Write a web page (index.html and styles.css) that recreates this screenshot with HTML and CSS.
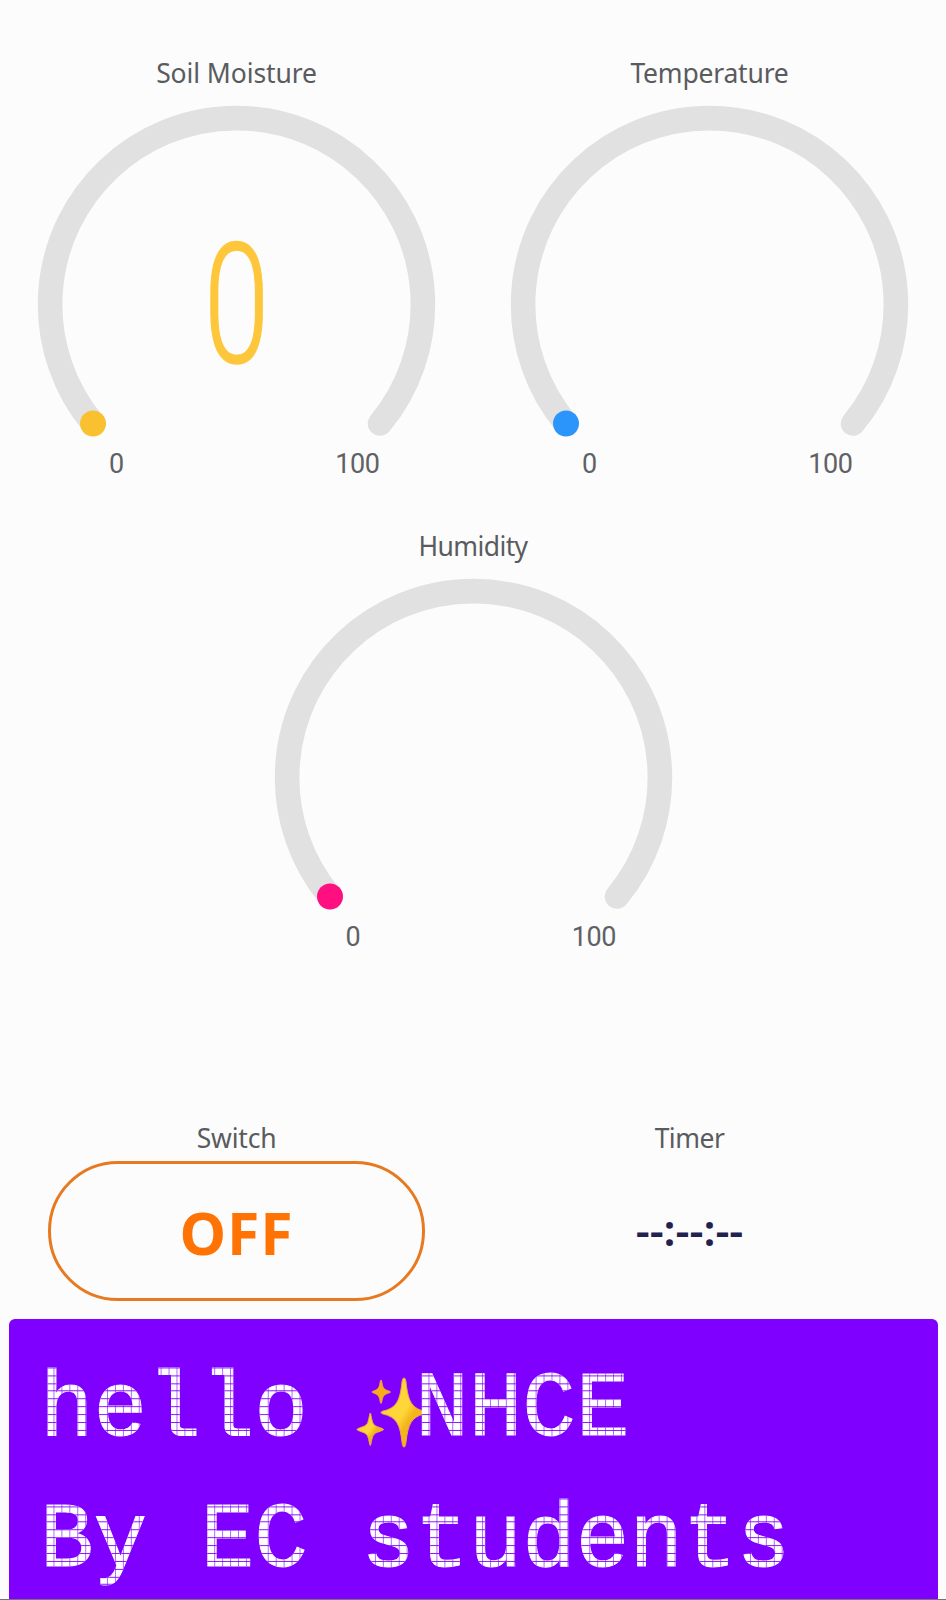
FILE: index.html
```html
<!DOCTYPE html>
<html lang="en">
<head>
<meta charset="utf-8">
<title>Plant monitor</title>
<link rel="stylesheet" href="styles.css">
</head>
<body>
<main class="dashboard">
  <section class="gauges">
    <article class="gauge">
      <h2 class="title title-soil">Soil Moisture</h2>
      <svg class="dial" viewBox="0 0 473 346">
        <path class="track" d="M93 332.500A186.400 186.400 0 1 1 380 332.500"/>
        <circle cx="93" cy="332.500" r="13" fill="#f9c130"/>
        <text class="value" transform="translate(236.7 271) scale(.7 1)" text-anchor="middle">0</text>
      </svg>
      <div class="range"><span>0</span><span>100</span></div>
    </article>
    <article class="gauge">
      <h2 class="title title-temperature">Temperature</h2>
      <svg class="dial" viewBox="0 0 473 346">
        <path class="track" d="M93 332.500A186.400 186.400 0 1 1 380 332.500"/>
        <circle cx="93" cy="332.500" r="13" fill="#2b95fb"/>
      </svg>
      <div class="range"><span>0</span><span>100</span></div>
    </article>
    <article class="gauge">
      <h2 class="title title-humidity">Humidity</h2>
      <svg class="dial" viewBox="0 0 473 346">
        <path class="track" d="M93 332.500A186.400 186.400 0 1 1 380 332.500"/>
        <circle cx="93" cy="332.500" r="13" fill="#ff0f80"/>
      </svg>
      <div class="range"><span>0</span><span>100</span></div>
    </article>
  </section>
  <section class="controls">
    <div class="control">
      <h2 class="title title-switch">Switch</h2>
      <button class="switch" type="button">OFF</button>
    </div>
    <div class="control">
      <h2 class="title title-timer">Timer</h2>
      <div class="timer">--:--:--</div>
    </div>
  </section>
  <section class="lcd">
    <div class="line">
      <span class="dots">hello </span><span class="emoji"><svg class="sparkles" viewBox="0 0 70 74">
        <defs>
          <linearGradient id="gold" x1="0" y1="0" x2="1" y2="1">
            <stop offset=".5" stop-color="#ffd63a"/><stop offset=".62" stop-color="#f3b51c"/>
          </linearGradient>
        </defs>
        <g stroke="#f2a53a" stroke-width="1" stroke-linejoin="round">
          <path fill="url(#gold)" d="M49 2C50 2 50.500 3 51 6C53 24 56 32 69 35Q72 37 69 38C56 41 53 49 51 66C50.500 70 50 71 49 71C48 71 47.500 70 47 66C45 49 42 41 28 38Q24 36.500 28 35C42 32 45 24 47 6C47.500 3 48 2 49 2Z"/>
          <path fill="url(#gold)" d="M15.300 37C16 37 16.500 45 18.500 48C20 51 28.500 52 28.500 53.500C28.500 55 20 56 18.500 59C16.500 62 16 69.500 15.300 69.500C14.500 69.500 14 62 12 59C10 56 2 55 2 53.500C2 52 10 51 12 48C14 45 14.500 37 15.300 37Z"/>
          <path fill="#f9ac15" d="M26 4C26.800 4 27 9.500 28.500 12C30 14.500 35.500 15 35.500 16C35.500 17 30 17.500 28.500 20C27 22.500 26.800 27.500 26 27.500C25.200 27.500 25 22.500 23.500 20C22 17.500 17 17 17 16C17 15 22 14.500 23.500 12C25 9.500 25.200 4 26 4Z"/>
        </g>
      </svg></span><span class="dots">NHCE</span>
    </div>
    <div class="line"><span class="dots">By EC students</span></div>
  </section>
</main>
</body>
</html>
```

FILE: styles.css
```css
* { box-sizing: border-box; }
body { margin: 0; background: #fcfcfc; font-family: "Noto Sans", sans-serif; }
.dashboard { width: 946px; height: 1600px; overflow: hidden; border-bottom: 1px solid #77717c; }
.gauges { display: flex; flex-wrap: wrap; justify-content: center; height: 1109px; align-content: flex-start; }
.gauge { width: 473px; height: 473px; padding-top: 53px; }
.title { margin: 0; height: 38px; line-height: 41px; font-size: 26.500px; font-weight: 400; color: #5a5b5e; text-align: center; white-space: nowrap; }
.title-soil { letter-spacing: -.1px; }
.title-temperature { letter-spacing: -.2px; }
.title-humidity { letter-spacing: -.6px; }
.title-switch { letter-spacing: -.2px; }
.title-timer { letter-spacing: -.5px; }
.dial { display: block; width: 473px; height: 346px; }
.track { fill: none; stroke: #e1e1e1; stroke-width: 24.600px; stroke-linecap: round; }
.value { font: 300 168px Roboto, sans-serif; fill: #fec63a; stroke: #fec63a; stroke-width: 1.500px; }
.range { display: flex; justify-content: space-between; padding: 11px 93.500px 0 109px; font: 27px/33px Roboto, sans-serif; letter-spacing: -.4px; color: #606164; }
.controls { display: grid; grid-template-columns: 473px 433px; height: 209.500px; padding-top: 10px; }
.control { display: flex; flex-direction: column; align-items: center; }
.control .title { height: 42px; line-height: 38px; }
.switch { width: 377px; height: 140px; padding: 2px 0 0; border: 3px solid #e77a20; border-radius: 70px; background: transparent; color: #ff7305; font: 700 59px/1 "Noto Sans", sans-serif; letter-spacing: .8px; }
.timer { margin-top: 38px; font-size: 43.500px; font-weight: 600; line-height: 60px; color: #222250; }
.lcd { width: 928.500px; height: 300px; margin-left: 9px; padding-top: 26.500px; border-radius: 6px; background: #8000ff; }
.line { display: flex; height: 131.600px; padding-left: 31px; align-items: center; }
/* Each character cell has its own dot matrix, clipped to the letter shapes. */
.dots {
  position: relative;
  z-index: 1;
  white-space: pre;
  font: 400 89.300px/104px "Liberation Mono", monospace;
  color: transparent;
  -webkit-text-stroke: 1px transparent;
  background-image:
    repeating-linear-gradient(90deg, transparent 0 6.900px, rgba(128, 0, 255, .6) 6.900px 7.900px),
    repeating-linear-gradient(transparent 0 6.600px, rgba(128, 0, 255, .9) 6.600px 7.580px),
    linear-gradient(#fff, #fff);
  background-size: 53.590px 100%;
  background-position: 6.500px 3px;
  -webkit-background-clip: text;
  background-clip: text;
  transform: scaleY(1.03);
}
.emoji { position: relative; width: 53.600px; height: 104px; }
.sparkles { position: absolute; left: -7px; top: 17px; width: 70px; height: 74px; }
```
